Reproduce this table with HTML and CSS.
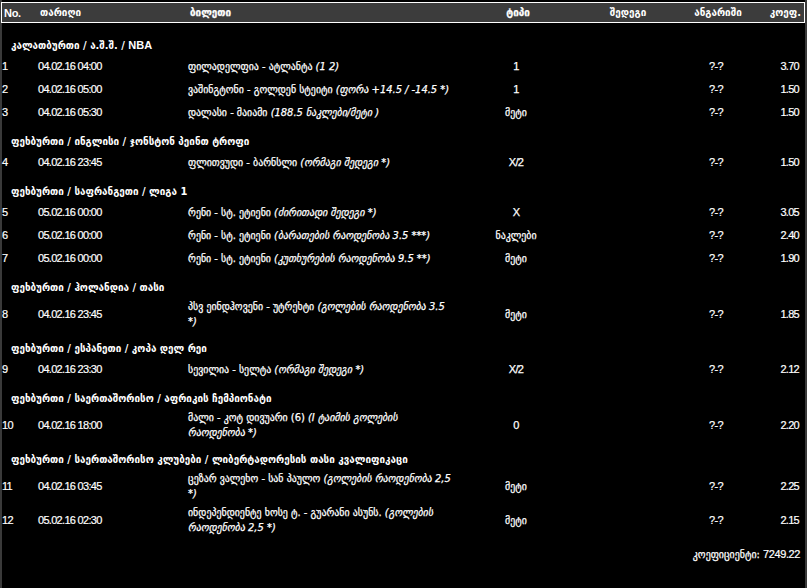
FILE: index.html
```html
<!DOCTYPE html>
<html lang="ka">
<head>
<meta charset="utf-8">
<title>ბილეთი</title>
<link rel="stylesheet" href="styles.css">
</head>
<body>
<div class="wrap">
  <div class="head grid">
    <div class="c-no num">No.</div>
    <div class="c-date">თარიღი</div>
    <div class="c-ticket">ბილეთი</div>
    <div class="c-type">ტიპი</div>
    <div class="c-res">შედეგი</div>
    <div class="c-acc">ანგარიში</div>
    <div class="c-coef">კოეფ.</div>
  </div>

  <div class="group first">კალათბურთი / ა.შ.შ. / <span class="num">NBA</span></div>
  <div class="row grid">
    <div class="c-no num">1</div><div class="c-date num">04.02.16 04:00</div>
    <div class="c-ticket">ფილადელფია - ატლანტა <i>(1 2)</i></div>
    <div class="c-type num">1</div><div class="c-res"></div><div class="c-acc num">?-?</div><div class="c-coef num">3.70</div>
  </div>
  <div class="row grid">
    <div class="c-no num">2</div><div class="c-date num">04.02.16 05:00</div>
    <div class="c-ticket">ვაშინგტონი - გოლდენ სტეიტი <i>(ფორა +14.5 / -14.5 *)</i></div>
    <div class="c-type num">1</div><div class="c-res"></div><div class="c-acc num">?-?</div><div class="c-coef num">1.50</div>
  </div>
  <div class="row grid">
    <div class="c-no num">3</div><div class="c-date num">04.02.16 05:30</div>
    <div class="c-ticket">დალასი - მაიამი <i>(188.5 ნაკლები/მეტი )</i></div>
    <div class="c-type">მეტი</div><div class="c-res"></div><div class="c-acc num">?-?</div><div class="c-coef num">1.50</div>
  </div>

  <div class="group">ფეხბურთი / ინგლისი / ჯონსტონ პეინთ ტროფი</div>
  <div class="row grid">
    <div class="c-no num">4</div><div class="c-date num">04.02.16 23:45</div>
    <div class="c-ticket">ფლითვუდი - ბარნსლი <i>(ორმაგი შედეგი *)</i></div>
    <div class="c-type num">X/2</div><div class="c-res"></div><div class="c-acc num">?-?</div><div class="c-coef num">1.50</div>
  </div>

  <div class="group">ფეხბურთი / საფრანგეთი / ლიგა 1</div>
  <div class="row grid">
    <div class="c-no num">5</div><div class="c-date num">05.02.16 00:00</div>
    <div class="c-ticket">რენი - სტ. ეტიენი <i>(ძირითადი შედეგი *)</i></div>
    <div class="c-type num">X</div><div class="c-res"></div><div class="c-acc num">?-?</div><div class="c-coef num">3.05</div>
  </div>
  <div class="row grid">
    <div class="c-no num">6</div><div class="c-date num">05.02.16 00:00</div>
    <div class="c-ticket">რენი - სტ. ეტიენი <i>(ბარათების რაოდენობა 3.5 ***)</i></div>
    <div class="c-type">ნაკლები</div><div class="c-res"></div><div class="c-acc num">?-?</div><div class="c-coef num">2.40</div>
  </div>
  <div class="row grid">
    <div class="c-no num">7</div><div class="c-date num">05.02.16 00:00</div>
    <div class="c-ticket">რენი - სტ. ეტიენი <i>(კუთხურების რაოდენობა 9.5 **)</i></div>
    <div class="c-type">მეტი</div><div class="c-res"></div><div class="c-acc num">?-?</div><div class="c-coef num">1.90</div>
  </div>

  <div class="group">ფეხბურთი / ჰოლანდია / თასი</div>
  <div class="row grid">
    <div class="c-no num">8</div><div class="c-date num">04.02.16 23:45</div>
    <div class="c-ticket">პსვ ეინდჰოვენი - უტრეხტი <i>(გოლების რაოდენობა 3.5<br>*)</i></div>
    <div class="c-type">მეტი</div><div class="c-res"></div><div class="c-acc num">?-?</div><div class="c-coef num">1.85</div>
  </div>

  <div class="group">ფეხბურთი / ესპანეთი / კოპა დელ რეი</div>
  <div class="row grid">
    <div class="c-no num">9</div><div class="c-date num">04.02.16 23:30</div>
    <div class="c-ticket">სევილია - სელტა <i>(ორმაგი შედეგი *)</i></div>
    <div class="c-type num">X/2</div><div class="c-res"></div><div class="c-acc num">?-?</div><div class="c-coef num">2.12</div>
  </div>

  <div class="group">ფეხბურთი / საერთაშორისო / აფრიკის ჩემპიონატი</div>
  <div class="row grid">
    <div class="c-no num">10</div><div class="c-date num">04.02.16 18:00</div>
    <div class="c-ticket">მალი - კოტ დივუარი (6) <i>(I ტაიმის გოლების<br>რაოდენობა *)</i></div>
    <div class="c-type num">0</div><div class="c-res"></div><div class="c-acc num">?-?</div><div class="c-coef num">2.20</div>
  </div>

  <div class="group">ფეხბურთი / საერთაშორისო კლუბები / ლიბერტადორესის თასი კვალიფიკაცი</div>
  <div class="row grid">
    <div class="c-no num">11</div><div class="c-date num">04.02.16 03:45</div>
    <div class="c-ticket">ცეზარ ვალეხო - სან პაულო <i>(გოლების რაოდენობა 2,5<br>*)</i></div>
    <div class="c-type">მეტი</div><div class="c-res"></div><div class="c-acc num">?-?</div><div class="c-coef num">2.25</div>
  </div>
  <div class="row grid">
    <div class="c-no num">12</div><div class="c-date num">05.02.16 02:30</div>
    <div class="c-ticket">ინდეპენდიენტე ხოსე ტ. - გუარანი ასუნს. <i>(გოლების<br>რაოდენობა 2,5 *)</i></div>
    <div class="c-type">მეტი</div><div class="c-res"></div><div class="c-acc num">?-?</div><div class="c-coef num">2.15</div>
  </div>

  <div class="total">კოეფიციენტი: <span class="num">7249.22</span></div>
</div>
</body>
</html>
```

FILE: styles.css
```css
html, body {
  margin: 0;
  padding: 0;
  background: #000;
}
body {
  color: #fff;
  font-family: "DejaVu Sans Condensed", "DejaVu Sans", sans-serif;
  font-size: 11px;
}
.num {
  font-family: "Liberation Sans", Arial, sans-serif;
  letter-spacing: -0.7px;
  -webkit-text-stroke: 0.2px #fff;
}
.wrap {
  height: 588px;
  box-sizing: border-box;
  border-left: 2px solid #3a3a3a;
  border-right: 2px solid #3a3a3a;
  padding-top: 2px;
}
.grid {
  display: grid;
  grid-template-columns: 36px 150px 280px 96px 124px 56px 55px;
  padding-left: 2px;
  align-items: center;
}
.head {
  background: #3c3c3c;
  border: 1px solid #fff;
  margin-left: -1px;
  height: 19px;
  font-weight: bold;
  margin-bottom: 3px;
}
.head .num { letter-spacing: -0.3px; -webkit-text-stroke: 0; }
.c-type, .c-res, .c-acc { text-align: center; }
.c-coef { text-align: right; }
.group {
  padding: 11px 0 3px 9px;
  line-height: 13px;
  font-weight: bold;
  white-space: nowrap;
}
.group .num { letter-spacing: 0; -webkit-text-stroke: 0; }
.group.first { padding-top: 13px; }
.row {
  padding: 2px 0;
  line-height: 15px;
  min-height: 19px;
}
.c-ticket, .c-type, .total {
  -webkit-text-stroke: 0.25px #fff;
}
.c-ticket {
  white-space: nowrap;
}
.row i { font-style: italic; }
.total {
  text-align: right;
  padding: 10px 5px 0 0;
  line-height: 15px;
}
.total .num { letter-spacing: -0.4px; }
```
